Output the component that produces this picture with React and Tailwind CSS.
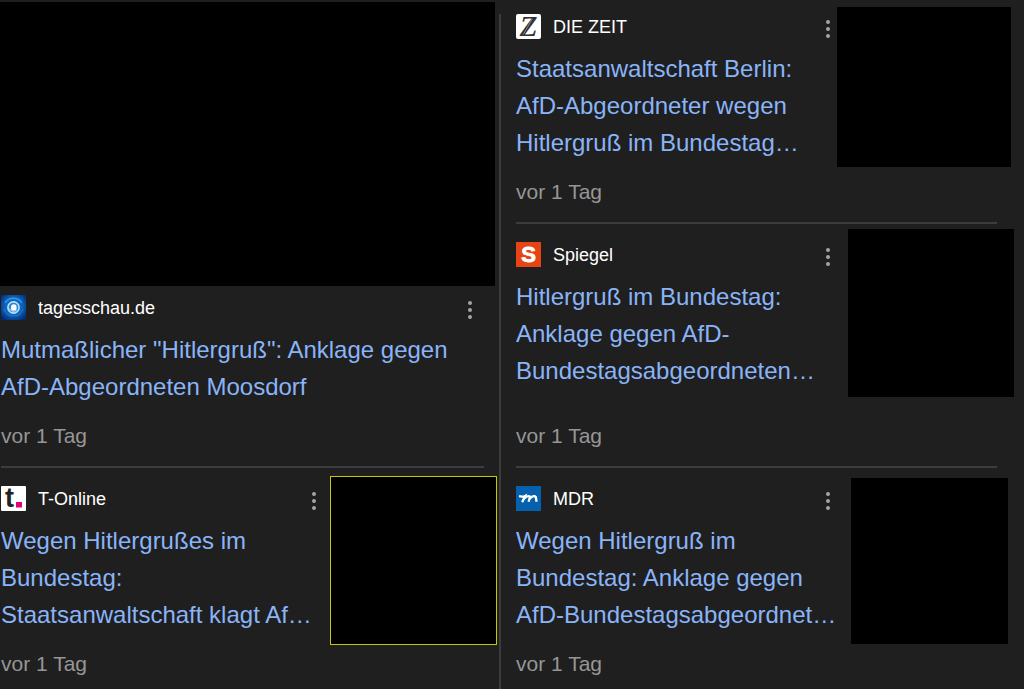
import { EllipsisVertical } from "lucide-react";

function TagesschauLogo() {
  return (
    <svg viewBox="0 0 25 25" className="size-[25px] shrink-0" aria-hidden="true">
      <defs>
        <radialGradient id="ts-bg" cx="50%" cy="45%" r="65%">
          <stop offset="0" stopColor="#1c86d8" />
          <stop offset="0.6" stopColor="#0c5cb4" />
          <stop offset="1" stopColor="#052a6c" />
        </radialGradient>
      </defs>
      <rect width="25" height="25" fill="url(#ts-bg)" />
      <path d="M4 8a10 10 0 0 1 17 0" fill="none" stroke="#2f9be6" strokeWidth="1.4" />
      <path d="M3 14a10 10 0 0 0 19 0" fill="none" stroke="#1673c6" strokeWidth="1.4" />
      <circle cx="12.5" cy="12.5" r="5.6" fill="#2b87d3" stroke="#b9e0fa" strokeWidth="1.6" />
      <ellipse cx="12.8" cy="12.4" rx="2.8" ry="3.2" fill="#fff" />
      <path d="M8.6 13.6c1 2.4 4.4 3.6 7 1.4" fill="none" stroke="#e4f4ff" strokeWidth="1" />
    </svg>
  );
}

function TOnlineLogo() {
  return (
    <svg viewBox="0 0 25 25" className="size-[25px] shrink-0 overflow-visible" aria-hidden="true">
      <rect width="25" height="25" rx="1" fill="#fff" />
      <text x="4" y="21" fontFamily="Liberation Sans, sans-serif" fontWeight="700" fontSize="27" fill="#222">
        t
      </text>
      <rect x="15" y="16" width="6" height="5.5" fill="#e20074" />
    </svg>
  );
}

function ZeitLogo() {
  return (
    <svg viewBox="0 0 25 25" className="size-[25px] shrink-0 overflow-visible" aria-hidden="true">
      <rect width="25" height="25" rx="2" fill="#fff" />
      <text
        x="12.5"
        y="22"
        textAnchor="middle"
        fontFamily="Liberation Serif, serif"
        fontStyle="italic"
        fontWeight="700"
        fontSize="29"
        fill="#333"
      >
        Z
      </text>
      <path d="M16.2 5L7.2 20.6" stroke="#999" strokeWidth="0.8" />
    </svg>
  );
}

function SpiegelLogo() {
  return (
    <svg viewBox="0 0 25 25" className="size-[25px] shrink-0 overflow-visible" aria-hidden="true">
      <rect width="25" height="25" fill="#e64415" />
      <text
        x="12.5"
        y="20"
        textAnchor="middle"
        fontFamily="Liberation Sans, sans-serif"
        fontWeight="700"
        fontSize="22"
        fill="#fff"
        stroke="#fff"
        strokeWidth="0.8"
      >
        S
      </text>
    </svg>
  );
}

function MdrLogo() {
  return (
    <svg viewBox="0 0 25 25" className="size-[25px] shrink-0" aria-hidden="true">
      <rect width="25" height="25" fill="#0560ad" />
      <path
        d="M3 10.2C5.4 10.8 7.4 10.8 9 10L6.2 16.2M7 14C9.4 10.6 12.6 9.2 14 10.6L12.6 15.8M13.2 13.4C15.4 10.2 18.4 9.2 19.8 11L20.6 15.8"
        fill="none"
        stroke="#fff"
        strokeWidth="2.3"
      />
    </svg>
  );
}

function StoryHeader({ logo, source }) {
  return (
    <div className="flex h-[25px] items-center">
      {logo}
      <span className="ml-3 text-[18px] leading-6 text-white">{source}</span>
      <button type="button" aria-label={"Mehr zu " + source} className="ml-auto flex w-[18px] justify-center text-[#a5a5a5]">
        <EllipsisVertical className="mt-1 size-6 shrink-0" fill="currentColor" />
      </button>
    </div>
  );
}

function StoryText({ logo, source, title, time }) {
  return (
    <div className="flex min-w-0 flex-1 flex-col">
      <StoryHeader logo={logo} source={source} />
      <h3 className="mt-[11px] whitespace-pre text-[24px] leading-[37px] text-[#8ab4f8]">
        <a href="#">{title}</a>
      </h3>
      <p className="mt-auto pt-[18px] text-[21px] leading-[26px] text-[#969696]">{time}</p>
    </div>
  );
}

// thumb holds the size and margins of the picture slot
function Story({ thumb, className, ...story }) {
  return (
    <article className={"flex " + className}>
      <StoryText {...story} />
      {thumb}
    </article>
  );
}

export default function App() {
  return (
    <main className="grid min-h-screen grid-cols-[minmax(0,499fr)_2px_minmax(0,523fr)] grid-rows-[auto_1fr] overflow-hidden bg-[#1f1f1f] font-['Liberation_Sans',Arial,sans-serif]">
      <section className="flex flex-col pt-0.5">
        <div className="mr-1 h-[284px] bg-black" />
        <article className="flex flex-1 pt-[9px] pb-[17px] pl-px pr-5">
          <StoryText
            logo={<TagesschauLogo />}
            source="tagesschau.de"
            title={'Mutmaßlicher "Hitlergruß": Anklage gegen\nAfD-Abgeordneten Moosdorf'}
            time="vor 1 Tag"
          />
        </article>
        <hr className="ml-px mr-[15px] border-t-2 border-[#3c3c3c]" />
      </section>

      <div className="row-span-2 mt-3.5 bg-[#3c3c3c]" />

      <section className="flex flex-col pl-[15px]">
        <Story
          className="pt-3.5 pb-[17px]"
          logo={<ZeitLogo />}
          source="DIE ZEIT"
          title={"Staatsanwaltschaft Berlin:\nAfD-Abgeordneter wegen\nHitlergruß im Bundestag…"}
          time="vor 1 Tag"
          thumb={
            <div className="-mt-[7px] w-[187px] shrink-0">
              <div className="mr-[13px] h-40 bg-black" />
            </div>
          }
        />
        <hr className="mr-[27px] border-t-2 border-[#3c3c3c]" />
        <Story
          className="flex-1 pt-[18px] pb-[17px]"
          logo={<SpiegelLogo />}
          source="Spiegel"
          title={"Hitlergruß im Bundestag:\nAnklage gegen AfD-\nBundestagsabgeordneten…"}
          time="vor 1 Tag"
          thumb={
            <div className="-mt-[13px] w-[187px] shrink-0">
              <div className="ml-[11px] mr-2.5 h-[168px] bg-black" />
            </div>
          }
        />
        <hr className="mr-[27px] border-t-2 border-[#3c3c3c]" />
      </section>

      <section className="pl-px">
        <Story
          className="pt-[18px]"
          logo={<TOnlineLogo />}
          source="T-Online"
          title={"Wegen Hitlergrußes im\nBundestag:\nStaatsanwaltschaft klagt Af…"}
          time="vor 1 Tag"
          thumb={
            <div className="-mt-2.5 w-44 shrink-0">
              <div className="ml-[7px] mr-0.5 h-[169px] border border-[#c8c800] bg-black" />
            </div>
          }
        />
      </section>

      <section className="pl-[15px]">
        <Story
          className="pt-[18px]"
          logo={<MdrLogo />}
          source="MDR"
          title={"Wegen Hitlergruß im\nBundestag: Anklage gegen\nAfD-Bundestagsabgeordnet…"}
          time="vor 1 Tag"
          thumb={
            <div className="-mt-2 w-[187px] shrink-0">
              <div className="ml-3.5 mr-4 h-[166px] bg-black" />
            </div>
          }
        />
      </section>
    </main>
  );
}
